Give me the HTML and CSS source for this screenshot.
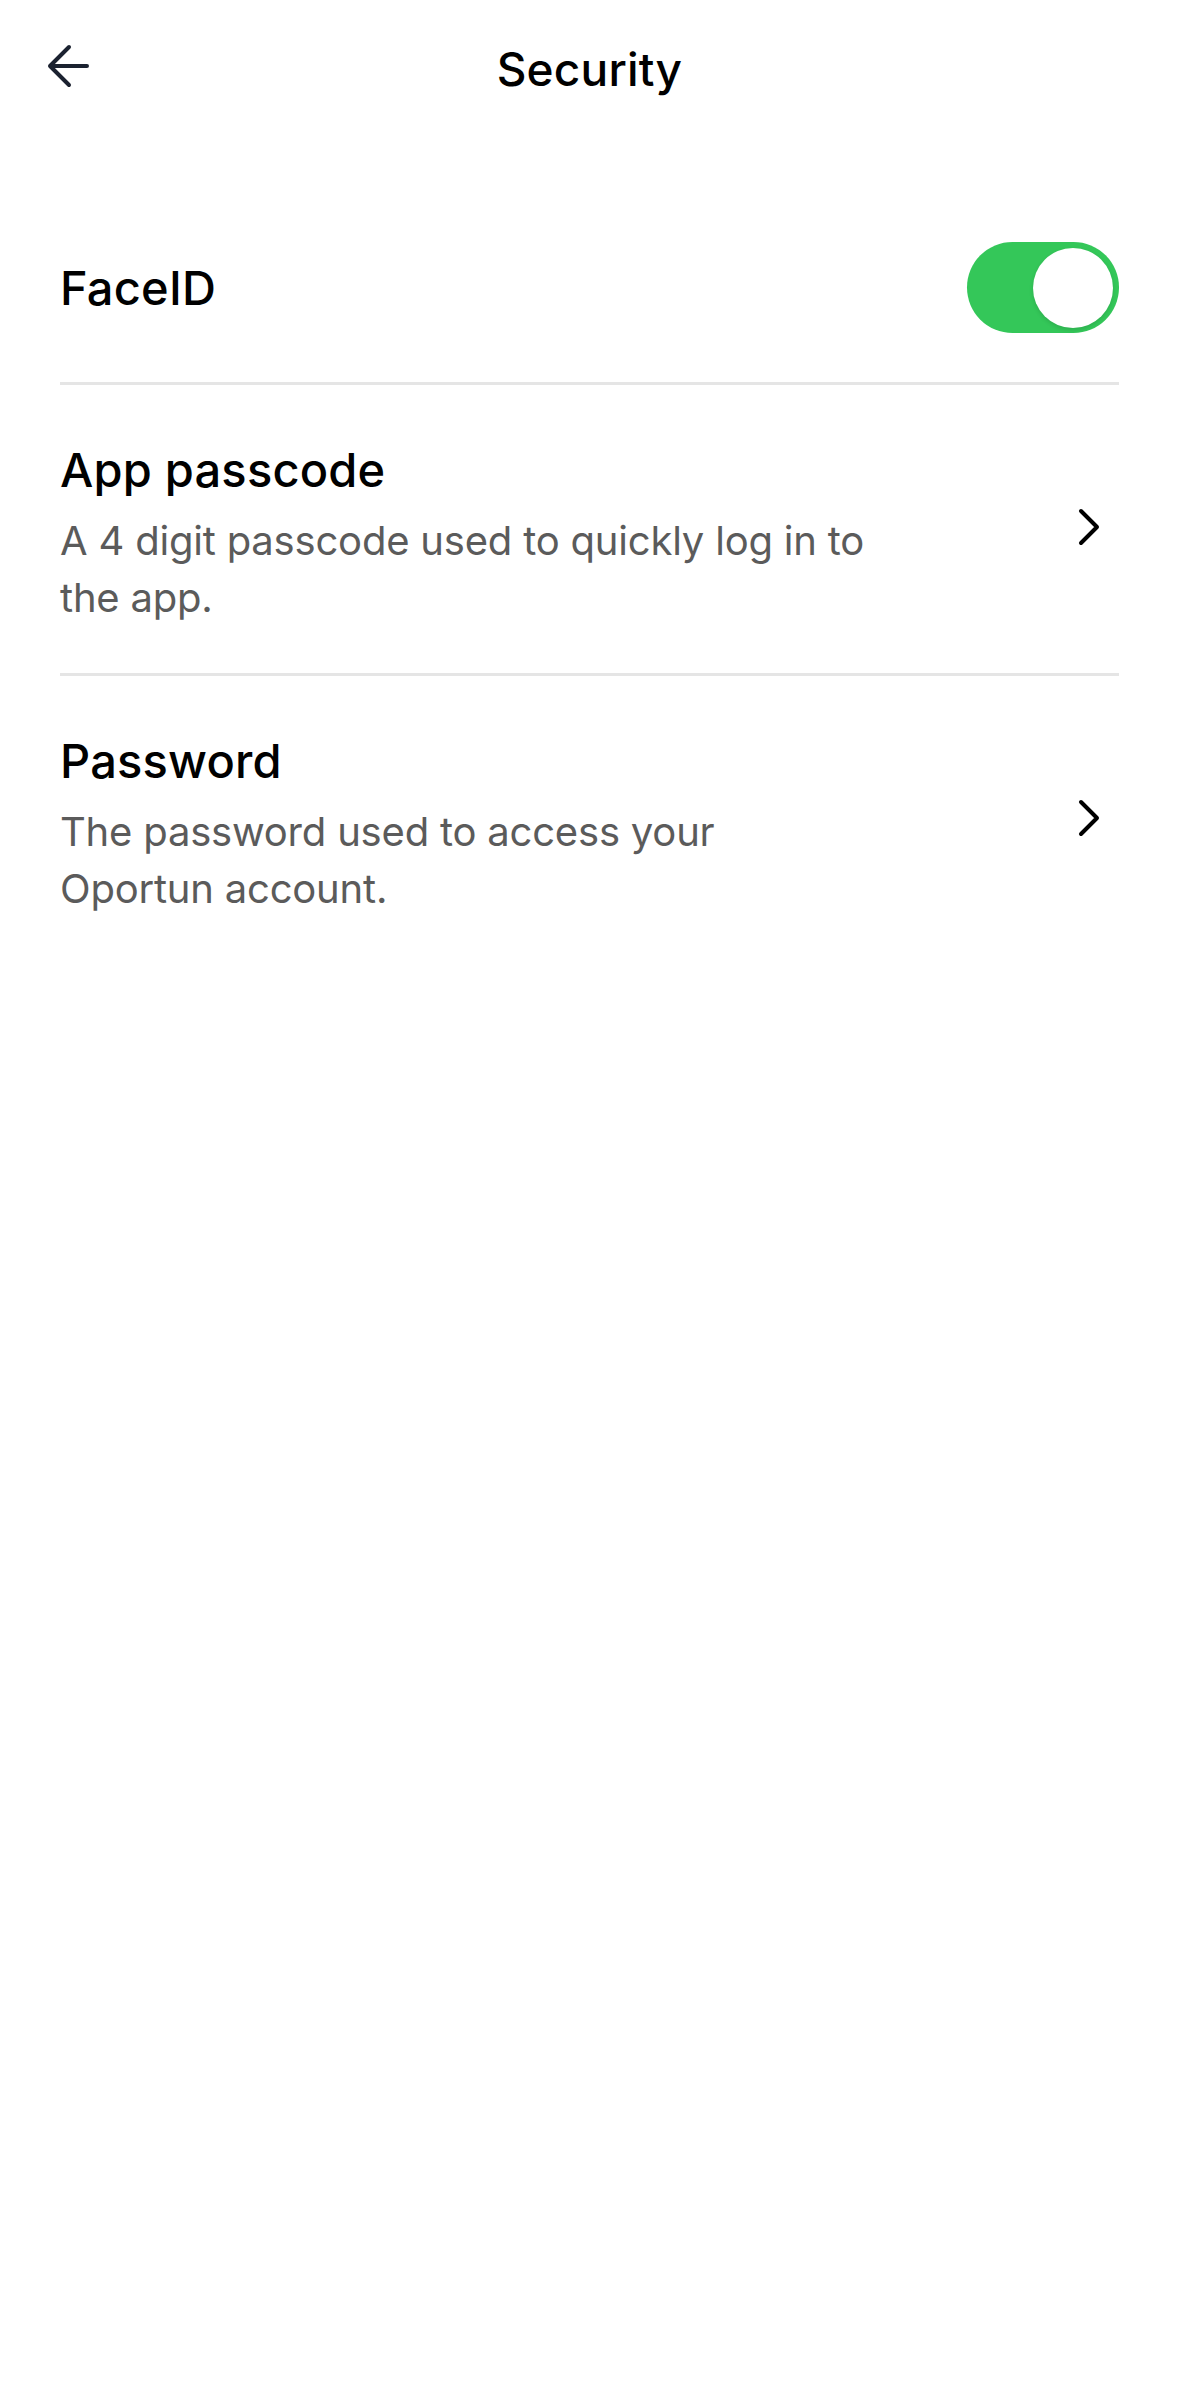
FILE: index.html
```html
<!DOCTYPE html>
<html lang="en">
<head>
<meta charset="utf-8">
<title>Security</title>
<link rel="stylesheet" href="styles.css">
</head>
<body>
<header class="header">
  <button class="back" aria-label="Back">
    <svg width="48" height="48" viewBox="0 0 48 48" fill="none" stroke="#1b2230" stroke-width="4" stroke-linecap="round" stroke-linejoin="round">
      <path d="M43 24H6M25 5L6 24l19 19"/>
    </svg>
  </button>
  <h1 class="title">Security</h1>
  <span></span>
</header>
<main class="list">
  <div class="row row-toggle">
    <div class="row-title">FaceID</div>
    <div class="switch on"><span class="knob"></span></div>
  </div>
  <div class="divider"></div>
  <div class="row row-link">
    <div class="row-text">
      <div class="row-title">App passcode</div>
      <div class="row-desc">A 4 digit passcode used to quickly log in to the app.</div>
    </div>
    <svg class="chev" width="24" height="40" viewBox="0 0 24 40" fill="none" stroke="#000" stroke-width="4" stroke-linecap="round" stroke-linejoin="round"><path d="M4 4l16 16L4 36"/></svg>
  </div>
  <div class="divider"></div>
  <div class="row row-link">
    <div class="row-text">
      <div class="row-title">Password</div>
      <div class="row-desc">The password used to access your Oportun account.</div>
    </div>
    <svg class="chev" width="24" height="40" viewBox="0 0 24 40" fill="none" stroke="#000" stroke-width="4" stroke-linecap="round" stroke-linejoin="round"><path d="M4 4l16 16L4 36"/></svg>
  </div>
</main>
</body>
</html>
```
FILE: styles.css
```css
* { box-sizing: border-box; }
html, body { margin: 0; padding: 0; background: #fff; }
body {
  font-family: Inter, "Noto Sans", sans-serif;
  color: #000;
  width: 1179px;
  min-height: 2396px;
}
.header {
  height: 138px;
  display: grid;
  grid-template-columns: 1fr auto 1fr;
  align-items: center;
}
.back {
  justify-self: start;
  align-self: start;
  margin: 42px 0 0 44px;
  padding: 0;
  border: 0;
  background: none;
  width: 48px;
  height: 48px;
  display: block;
}
.back svg { display: block; }
.title {
  margin: 0;
  font-size: 46px;
  font-weight: 500;
  line-height: 60px;
  letter-spacing: 0.2px;
}
.list {
  padding: 54px 60px 0;
}
.row {
  display: flex;
  align-items: center;
  justify-content: space-between;
}
.row-toggle {
  padding: 50px 0 49px;
}
.row-title {
  font-size: 47px;
  font-weight: 500;
  line-height: 60px;
  letter-spacing: 0.2px;
}
.row-link {
  padding: 55px 0 47px;
}
.row-text {
  max-width: 812px;
  display: flex;
  flex-direction: column;
  gap: 12px;
}
.row-desc {
  font-size: 40px;
  font-weight: 400;
  line-height: 57px;
  color: #5b5b5b;
  letter-spacing: -0.2px;
}
.chev {
  flex: none;
  margin-right: 18px;
  margin-bottom: 12px;
}
.divider {
  height: 3px;
  background: #e5e5e5;
}
.switch {
  width: 152px;
  height: 91px;
  border-radius: 46px;
  background: #34c759;
  display: flex;
  align-items: center;
  justify-content: flex-end;
  padding-right: 6px;
}
.knob {
  width: 80px;
  height: 80px;
  border-radius: 50%;
  background: #fff;
  box-shadow: 0 2px 4px rgba(0,0,0,0.12);
}
```
